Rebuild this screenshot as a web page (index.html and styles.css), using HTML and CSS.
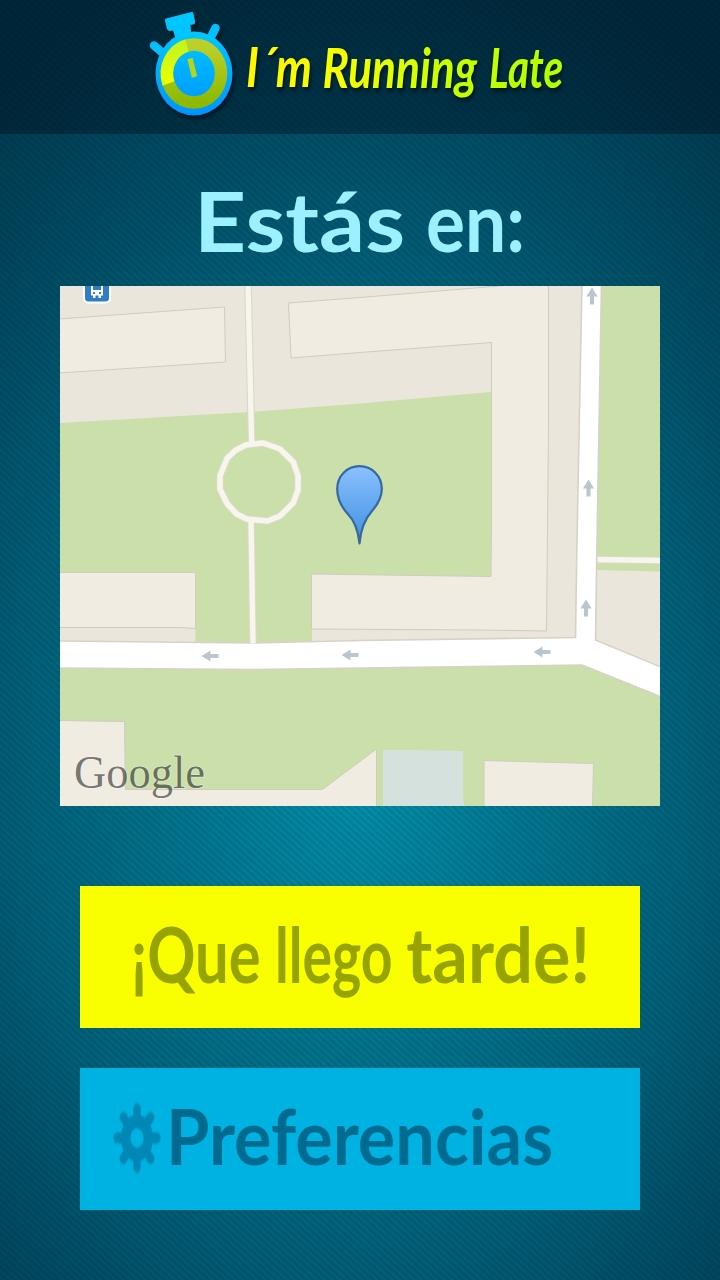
FILE: index.html
```html
<!DOCTYPE html>
<html lang="es">
<head>
<meta charset="utf-8">
<title>I´m Running Late</title>
<link rel="stylesheet" href="styles.css">
</head>
<body>
<header class="header">
  <svg class="logo" viewBox="140 0 440 134" width="440" height="134">
    <defs>
      <linearGradient id="blue" x1="0" y1="0" x2="0" y2="1"><stop offset="0" stop-color="#00c8ff"/><stop offset="1" stop-color="#0092ff"/></linearGradient>
      <linearGradient id="ring" x1="0" y1="0" x2="0" y2="1"><stop offset="0" stop-color="#bdd02a"/><stop offset="1" stop-color="#8eb900"/></linearGradient>
      <linearGradient id="slice" x1="0" y1="0" x2="0" y2="1"><stop offset="0" stop-color="#c5f51b"/><stop offset="1" stop-color="#edff00"/></linearGradient>
      <linearGradient id="title" gradientUnits="userSpaceOnUse" x1="0" y1="0" x2="425" y2="0"><stop offset="0" stop-color="#fff600"/><stop offset=".3" stop-color="#f4ff00"/><stop offset=".65" stop-color="#c8ff00"/><stop offset="1" stop-color="#b0ff00"/></linearGradient>
    </defs>
    <g class="watch">
      <path fill="#00c5ff" d="M166 18.500Q164.500 19 165 21L167 29Q168 31.500 170.500 31L173 30.500L176 40L191.500 37L190.500 25L193 24.500Q195.500 24 195 21.500L193.500 13.500Q193 11.500 190.500 12.200Z"/>
      <path d="M215.500 28L209 41M154 45.500L164 54" stroke="#00c0ff" stroke-width="8.500" stroke-linecap="round"/>
      <ellipse cx="194" cy="73.500" rx="38.500" ry="42" fill="url(#blue)"/>
      <ellipse cx="194" cy="73.500" rx="27" ry="29" fill="none" stroke="url(#ring)" stroke-width="12.500"/>
      <path d="M187 45.500A27 29 0 0 0 168.500 83.500" fill="none" stroke="url(#slice)" stroke-width="12.500"/>
      <path d="M190 58.500L194.500 77" stroke="#b5d51a" stroke-width="5.500"/>
    </g>
    <g class="logo-text" fill="url(#title)" transform="translate(246 87) scale(.75 1)">
      <text x="0" y="0" textLength="88" lengthAdjust="spacingAndGlyphs">I´m</text>
      <text x="102" y="1" textLength="206" lengthAdjust="spacingAndGlyphs">Running</text>
      <text x="324" y="1" textLength="99" lengthAdjust="spacingAndGlyphs">Late</text>
    </g>
  </svg>
</header>

<main class="content">
  <h1 class="heading">
    <svg width="600" height="152" viewBox="60 134 600 152">
      <g class="hand heading-text">
        <text x="194" y="252" textLength="211" lengthAdjust="spacingAndGlyphs">Estás</text>
        <text x="426" y="252" textLength="99" lengthAdjust="spacingAndGlyphs">en:</text>
      </g>
    </svg>
  </h1>

  <svg class="map" viewBox="0 0 600 520" width="600" height="520">
    <defs>
      <linearGradient id="pin" x1="0" y1="0" x2="0" y2="1"><stop offset="0" stop-color="#8ac1ff"/><stop offset="1" stop-color="#3f8fe0"/></linearGradient>
      <path id="arrow" fill="#bac5cd" d="M0 -8.500L5.600 .5H2V8.500H-2V.5H-5.600Z"/>
    </defs>
    <rect width="600" height="520" fill="#cbdfab"/>
    <path class="block" d="M0 0H522L515 352L252 356V343L431 290V106L300 117.500L190 126L0 137Z"/>
    <path class="block" d="M0 341H135.500V357H0ZM536 284L600 285.500V382L535 355Z"/>
    <g class="building">
      <path d="M-1 33L164.500 21L165.500 76L-1 87Z"/>
      <path d="M228.500 17L300 11.500L451 -1H488.500V139L487.500 245L486.500 345L420 344L251.500 343V288L431 290.500L431.500 245V56.500L300 66.500L231 72Z"/>
      <path d="M-1 286.500H135.500V342.500L120 341.500H-1Z"/>
      <path d="M-1 434.500L64.500 435.500L65.500 503.500H262.500L316.500 463V521H-1Z"/>
      <path d="M424 474.500L533.500 477.500L532.500 521H424Z"/>
    </g>
    <path fill="#d5e1dd" d="M323 464H353L403 465V506L404 520H323Z"/>
    <g fill="none" stroke-linejoin="round">
      <path d="M188 -2L191.700 158M191 232L193 358M536 273.500L601 274.500" stroke="#dad8c9" stroke-width="7.600"/>
      <path d="M185.700 159L203.300 157L220 163L233.300 176L238 189.700V204L233.300 216.700L220 230L207.300 235L186.700 233L176.700 228L167.300 218L160 203.300V189.700L167.300 172L175 164.700Z" stroke="#dcdccb" stroke-width="7"/>
      <path d="M188 -2L191.700 158M191 232L193 358M536 273.500L601 274.500" stroke="#f8f5ed" stroke-width="5.400"/>
      <path d="M185.700 159L203.300 157L220 163L233.300 176L238 189.700V204L233.300 216.700L220 230L207.300 235L186.700 233L176.700 228L167.300 218L160 203.300V189.700L167.300 172L175 164.700Z" stroke="#f8f5ed" stroke-width="5.500"/>
    </g>
    <path d="M-3 355L193 357L300 354.500L515.500 351.500L517 254L522 -3H541.500L537 254L535.500 354L603 382V411.500L522 379L300 382L193 383.500L-3 382Z" fill="#fff" stroke="#d8d1c7" stroke-width="1.600"/>
    <path d="M190.500 355H195.500V357.500H190.500Z" fill="#f8f5ed"/>
    <use href="#arrow" x="532" y="10"/><use href="#arrow" x="528.500" y="202"/><use href="#arrow" x="526" y="322"/>
    <use href="#arrow" transform="translate(150 370) rotate(-90)"/>
    <use href="#arrow" transform="translate(290 369) rotate(-90)"/>
    <use href="#arrow" transform="translate(482 366) rotate(-90)"/>
    <g>
      <rect x="24" y="-9" width="26" height="25.500" rx="4.500" fill="#2f7cc7" stroke="#fff" stroke-width="2"/>
      <path fill="#fff" fill-rule="evenodd" d="M31 -4H43V9.500H41V12H38.500V9.500H35.500V12H33V9.500H31ZM33 -2V4H41V-2ZM33 6V8H35V6ZM39 6V8H41V6Z"/>
    </g>
    <path d="M299.500 257.500C298.500 246 296 236 287 227C280 219 277.200 211 277.200 203C277.200 190 287 180.200 299.500 180.200S321.800 190 321.800 203C321.800 211 319 217 312 225C303 235 300.500 246 299.500 257.500Z" fill="url(#pin)" stroke="#35699f" stroke-width="2.200" stroke-linejoin="round"/>
    <text class="attribution" x="14" y="502" textLength="131" lengthAdjust="spacingAndGlyphs">Google</text>
  </svg>

  <div class="actions">
    <button class="button button-late" type="button">
      <svg viewBox="80 886 560 142" width="560" height="142">
        <g class="hand" transform="translate(131 983) scale(.8 1)">
          <text x="0" y="0" textLength="162" lengthAdjust="spacingAndGlyphs">¡Que</text>
          <text x="180" y="0" textLength="147" lengthAdjust="spacingAndGlyphs">llego</text>
          <text x="344" y="0" textLength="230" lengthAdjust="spacingAndGlyphs">tarde!</text>
        </g>
      </svg>
    </button>
    <button class="button button-settings" type="button">
      <svg viewBox="80 1068 560 142" width="560" height="142">
        <g class="gear" transform="translate(137 1138) scale(1 1.460)">
          <path d="M0 -20V20M-20 0H20M-13.500 -14L13.500 14M13.500 -14L-13.500 14" stroke-width="7.500" stroke-linecap="round"/>
          <circle r="11.500" stroke-width="9" fill="none"/>
          <circle class="gear-hole" r="6.600"/>
        </g>
        <g class="hand">
          <text x="166" y="1165" textLength="387" lengthAdjust="spacingAndGlyphs">Preferencias</text>
        </g>
      </svg>
    </button>
  </div>
</main>
</body>
</html>
```
FILE: styles.css
```css
* {
  box-sizing: border-box;
}

body {
  margin: 0;
  width: 720px;
  height: 1280px;
  overflow: hidden;
  background:
    repeating-linear-gradient(42deg, rgba(0, 20, 35, 0.17) 0, rgba(0, 20, 35, 0) 2.5px, rgba(0, 20, 35, 0.17) 5px),
    radial-gradient(ellipse 590px 850px at 360px 770px, #0095af 0%, #007d96 25%, #00627a 58%, #004e65 78%, #003b50 100%);
}

svg {
  display: block;
}

.header {
  display: flex;
  height: 134px;
  padding-left: 140px;
  background: linear-gradient(rgba(0, 10, 25, 0.4), rgba(0, 10, 25, 0.4));
}

.watch,
.logo-text {
  filter: drop-shadow(2px 3px 2px rgba(0, 0, 0, 0.55));
}

.watch path[stroke] {
  fill: none;
}

.logo-text {
  font: italic 700 56px "Lato", sans-serif;
}

.content {
  display: flex;
  flex-direction: column;
  align-items: center;
}

.heading {
  margin: 0;
}

.hand {
  font: 700 76px "Lato", sans-serif;
}

.heading-text {
  fill: #9cf0ff;
  font-size: 82px;
}

.map {
  overflow: hidden;
}

.block {
  fill: #eae6dc;
}

.building path {
  fill: #f0ece1;
  stroke: #cfcdbd;
  stroke-width: 1;
}

.attribution {
  font: 47px "Liberation Serif", serif;
  fill: #000;
  fill-opacity: 0.52;
  stroke: #fff;
  stroke-opacity: 0.4;
  stroke-width: 1.5px;
  paint-order: stroke;
}

.actions {
  display: flex;
  flex-direction: column;
  gap: 40px;
  padding-top: 80px;
}

.button {
  width: 560px;
  height: 142px;
  padding: 0;
  border: 0;
}

.button-late {
  background: #faff00;
  fill: #96a300;
}

.button-settings {
  background: #00b2e1;
  fill: #006b90;
}

.gear {
  stroke: #0087b5;
  filter: blur(0.7px);
}

.gear .gear-hole {
  fill: #00b2e1;
  stroke: none;
}
```
